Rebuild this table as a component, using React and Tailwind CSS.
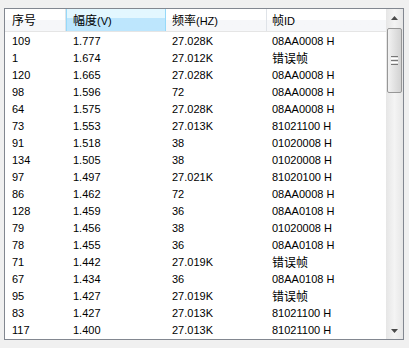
import React from "react"

const rows = [
  ["109", "1.777", "27.028K", "08AA0008 H"],
  ["1", "1.674", "27.012K", "错误帧"],
  ["120", "1.665", "27.028K", "08AA0008 H"],
  ["98", "1.596", "72", "08AA0008 H"],
  ["64", "1.575", "27.028K", "08AA0008 H"],
  ["73", "1.553", "27.013K", "81021100 H"],
  ["91", "1.518", "38", "01020008 H"],
  ["134", "1.505", "38", "01020008 H"],
  ["97", "1.497", "27.021K", "81020100 H"],
  ["86", "1.462", "72", "08AA0008 H"],
  ["128", "1.459", "36", "08AA0108 H"],
  ["79", "1.456", "38", "01020008 H"],
  ["78", "1.455", "36", "08AA0108 H"],
  ["71", "1.442", "27.019K", "错误帧"],
  ["67", "1.434", "36", "08AA0108 H"],
  ["95", "1.427", "27.019K", "错误帧"],
  ["83", "1.427", "27.013K", "81021100 H"],
  ["117", "1.400", "27.013K", "81021100 H"],
]

// cjk text is drawn a bit larger than the latin digits
function Txt({ children }) {
  if (/[\u4e00-\u9fff]/.test(children)) {
    return <span className="text-[12px]">{children}</span>
  }
  return <span>{children}</span>
}

function Arrow({ up }) {
  return (
    <svg width="7" height="4" viewBox="0 0 7 4">
      {up ? (
        <path d="M0 4 L3.5 0 L7 4 Z" fill="#4a4a4a" />
      ) : (
        <path d="M0 0 L7 0 L3.5 4 Z" fill="#4a4a4a" />
      )}
    </svg>
  )
}

export default function App() {
  return (
    <div
      className="w-[409px] h-[348px] bg-[#f0f0f0] pt-[8px] pl-[4px] text-black"
      style={{ fontFamily: '"Liberation Sans", "Noto Sans CJK SC", sans-serif' }}
    >
      <div className="w-[400px] h-[332px] border border-[#828790] bg-white flex overflow-hidden">
        <div className="flex-1 flex flex-col">
          {/* header */}
          <div className="h-[24px] flex border-b border-[#e5e5e5] bg-gradient-to-b from-white from-50% to-[#f6f7f9] to-50% text-[12px]">
            <div className="w-[61px] pl-[7px] pt-[2px] flex items-center border-r border-[#dfe3e8]">序号</div>
            <div className="w-[100px] pl-[6px] pt-[2px] flex items-center border-x border-[#96d9f9] bg-gradient-to-b from-[#e3f7ff] from-40% to-[#bde6fd] to-40%">
              幅度<span className="text-[11px]">(V)</span>
            </div>
            <div className="w-[101px] pl-[6px] pt-[2px] flex items-center border-r border-[#dfe3e8]">
              频率<span className="text-[11px]">(HZ)</span>
            </div>
            <div className="flex-1 pl-[5px] pt-[2px] flex items-center">
              帧<span className="text-[11px]">ID</span>
            </div>
          </div>
          {/* rows */}
          <div className="pt-[1px] flex flex-col text-[11px]">
            {rows.map((r, i) => (
              <div key={i} className="h-[17px] flex items-center">
                <div className="w-[61px] pl-[7px]">{r[0]}</div>
                <div className="w-[100px] pl-[7px]">{r[1]}</div>
                <div className="w-[101px] pl-[6px]">{r[2]}</div>
                <div className="flex-1 pl-[5px]"><Txt>{r[3]}</Txt></div>
              </div>
            ))}
          </div>
        </div>

        {/* scrollbar */}
        <div className="w-[17px] flex flex-col bg-gradient-to-r from-[#e6e6e6] via-[#f4f4f4] to-[#e6e6e6]">
          <div className="h-[17px] flex items-center justify-center">
            <Arrow up />
          </div>
          <div className="mt-[2px] mx-[1px] h-[65px] rounded-[2px] border border-[#979797] bg-gradient-to-r from-[#f2f2f2] to-[#d2d2d2] flex flex-col items-center justify-center gap-[1px]">
            <div className="w-[7px] h-[1px] bg-[#777]" />
            <div className="w-[7px] h-[1px] bg-[#fff]" />
            <div className="w-[7px] h-[1px] bg-[#777]" />
            <div className="w-[7px] h-[1px] bg-[#fff]" />
            <div className="w-[7px] h-[1px] bg-[#777]" />
          </div>
          <div className="flex-1" />
          <div className="h-[17px] flex items-center justify-center">
            <Arrow />
          </div>
        </div>
      </div>
    </div>
  )
}
